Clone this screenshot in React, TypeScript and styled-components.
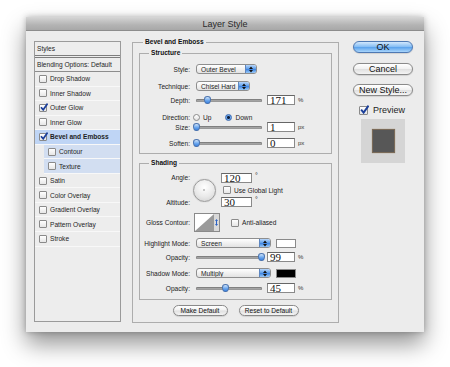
import { FC } from "react";
import styled, { createGlobalStyle } from "styled-components";

const GlobalStyle = createGlobalStyle`
	html, body {
		margin: 0;
		padding: 0;
		background: #fff;
	}
	body {
		font-family: "Liberation Sans", Arial, sans-serif;
		color: #1e1e1e;
	}
`;

const Page = styled.div`
	width: 450px;
	height: 367px;
	padding: 17px 0 0 26px;
	box-sizing: border-box;
	overflow: hidden;
`;

const Window = styled.div`
	width: 398px;
	height: 315px;
	background: #ececec;
	display: flex;
	flex-direction: column;
	box-shadow: 0 12px 22px rgba(0, 0, 0, 0.42), 0 0 6px rgba(0, 0, 0, 0.25);
`;

const TitleBar = styled.div`
	height: 13px;
	border-bottom: 1px solid #8c8c8c;
	background: linear-gradient(#d6d6d6, #b4b4b4 60%, #a8a8a8);
	display: flex;
	align-items: center;
	justify-content: center;
	font-size: 9px;
	color: #2a2a2a;
`;

const Body = styled.div`
	flex: 1;
	display: flex;
	align-items: flex-start;
	padding: 6px 0 0 8px;
`;

/* ---------- left styles list ---------- */

const StylesPanel = styled.div`
	margin-top: 4px;
	width: 87px;
	height: 281px;
	box-sizing: border-box;
	border: 1px solid #9a9a9a;
	background: #ededed;
	font-size: 6.6px;
`;

const ListHeader = styled.div`
	height: 13px;
	line-height: 13px;
	padding-left: 2px;
	border-bottom: 3px double #7d7d7d;
`;

const BlendRow = styled.div`
	height: 13px;
	line-height: 13px;
	padding-left: 2px;
	border-bottom: 1px solid #8d8d8d;
`;

const ListRow = styled.div<{ $selected?: boolean; $sub?: boolean }>`
	height: 14.55px;
	box-sizing: border-box;
	display: flex;
	align-items: center;
	gap: 3px;
	padding-left: 4px;
	margin-left: ${(p) => (p.$sub ? "9px" : "0")};
	border-bottom: 1px solid #f8f8f8;
	font-weight: ${(p) => (p.$selected ? "bold" : "normal")};
	background: ${(p) => (p.$selected ? "#bfd5f5" : p.$sub ? "#d2def1" : "transparent")};
`;

const Box = styled.span<{ $size?: number }>`
	position: relative;
	flex: none;
	width: ${(p) => p.$size || 6}px;
	height: ${(p) => p.$size || 6}px;
	border: 1px solid #8a8a8a;
	border-radius: 1px;
	background: linear-gradient(#ffffff, #e6e6e6);
	box-sizing: content-box;
`;

const Tick = styled.svg`
	position: absolute;
	left: 0;
	top: -2px;
`;

const CheckBox: FC<{ checked?: boolean; size?: number }> = ({ checked, size = 6 }) => (
	<Box $size={size}>
		{checked && (
			<Tick width={size + 2} height={size + 2} viewBox="0 0 8 8">
				<path d="M1 4.2 L3.2 6.8 L7.6 0.6" fill="none" stroke="#1b3f9a" strokeWidth="1.7" />
			</Tick>
		)}
	</Box>
);

/* ---------- middle group boxes ---------- */

const Middle = styled.div`
	margin-left: 11px;
	width: 207px;
`;

const Group = styled.fieldset<{ $pad: string; $mt?: number }>`
	margin: ${(p) => p.$mt || 0}px 0 0 0;
	padding: ${(p) => p.$pad};
	min-width: 0;
	border: 1px solid #adadad;
	box-sizing: border-box;
	width: 100%;
`;

const Legend = styled.legend<{ $ml: number }>`
	font-size: 6.6px;
	font-weight: bold;
	line-height: 10px;
	padding: 0 2px;
	margin-left: ${(p) => p.$ml}px;
	color: #111;
`;

const Row = styled.div<{ $mt?: number; $h?: number }>`
	display: grid;
	grid-template-columns: 50px 1fr;
	column-gap: 6px;
	align-items: center;
	height: ${(p) => p.$h || 10}px;
	margin-top: ${(p) => p.$mt || 0}px;
`;

const Label = styled.div`
	font-size: 6.6px;
	text-align: right;
	white-space: nowrap;
	color: #222;
`;

const Controls = styled.div`
	display: flex;
	align-items: center;
	height: 100%;
`;

const SelectBox = styled.div<{ $w: number }>`
	width: ${(p) => p.$w}px;
	height: 10px;
	box-sizing: border-box;
	display: flex;
	align-items: center;
	border: 1px solid #8e8e8e;
	border-radius: 3px;
	background: linear-gradient(#ffffff, #e3e3e3);
	font-size: 6.6px;
	overflow: hidden;
`;

const SelectText = styled.span`
	flex: 1;
	padding-left: 4px;
	white-space: nowrap;
`;

const SelectArrow = styled.span`
	width: 10px;
	height: 100%;
	display: flex;
	align-items: center;
	justify-content: center;
	border-left: 1px solid #5d86c0;
	background: linear-gradient(#b8d6fa, #5c9ce9 50%, #3f86e2 55%, #9ccaf7);
`;

const Select: FC<{ width: number; value: string }> = ({ width, value }) => (
	<SelectBox $w={width}>
		<SelectText>{value}</SelectText>
		<SelectArrow>
			<svg width="4" height="7" viewBox="0 0 4 7">
				<path d="M0 3 L2 0.5 L4 3 Z M0 4 L2 6.5 L4 4 Z" fill="#111" />
			</svg>
		</SelectArrow>
	</SelectBox>
);

const Track = styled.div`
	position: relative;
	width: 66px;
	height: 3px;
	border-radius: 2px;
	background: linear-gradient(#7d7d7d, #c9c9c9);
	box-shadow: inset 0 0 0 0.5px #777;
`;

const Thumb = styled.span`
	position: absolute;
	top: -3px;
	width: 7px;
	height: 8px;
	margin-left: -3.5px;
	border-radius: 50% 50% 45% 45% / 40% 40% 60% 60%;
	border: 0.5px solid #4b74b0;
	box-sizing: border-box;
	background: linear-gradient(#d5e8fc, #6ea9ef 55%, #3c82df);
`;

const NumField = styled.div<{ $w?: number }>`
	width: ${(p) => p.$w || 28}px;
	height: 10px;
	box-sizing: border-box;
	border: 1px solid #8a8a8a;
	border-top-color: #666;
	background: #fff;
	padding-left: 2px;
	font-family: "Liberation Serif", "Times New Roman", serif;
	font-size: 11px;
	line-height: 8px;
	color: #111;
	white-space: nowrap;
`;

const Unit = styled.span`
	font-size: 6px;
	margin-left: 3px;
	color: #333;
`;

const SliderField: FC<{ value: number; pct: number; unit: string }> = ({ value, pct, unit }) => (
	<Controls>
		<Track>
			<Thumb style={{ left: `${pct * 100}%` }} />
		</Track>
		<NumField style={{ marginLeft: 5 }}>{value}</NumField>
		<Unit>{unit}</Unit>
	</Controls>
);

const Radio = styled.span<{ $on?: boolean }>`
	width: 7px;
	height: 7px;
	box-sizing: border-box;
	border-radius: 50%;
	border: 1px solid ${(p) => (p.$on ? "#3d6bb0" : "#8a8a8a")};
	background: ${(p) =>
		p.$on
			? "radial-gradient(circle, #0d1d3a 0 1.3px, #7ab3f2 1.6px, #3e84e0)"
			: "linear-gradient(#ffffff, #e2e2e2)"};
`;

const OptText = styled.span`
	font-size: 6.6px;
	margin-left: 3px;
	color: #222;
`;

/* angle / altitude */

const AngleLabels = styled.div`
	display: flex;
	flex-direction: column;
	justify-content: space-between;
	height: 100%;
	line-height: 9px;
`;

const Dial = styled.div`
	position: relative;
	width: 23px;
	height: 23px;
	margin-left: -3px;
	box-sizing: border-box;
	border-radius: 50%;
	border: 1px solid #9b9b9b;
	background: radial-gradient(circle at 50% 35%, #ffffff, #e9e9e9 55%, #cdcdcd);
	box-shadow: 0 0 1px rgba(0, 0, 0, 0.25);
`;

const DialDot = styled.span`
	position: absolute;
	left: 9px;
	top: 9px;
	width: 2px;
	height: 2px;
	border-radius: 50%;
	background: #b5b5b5;
`;

const AngleStack = styled.div`
	display: flex;
	flex-direction: column;
	justify-content: space-between;
	height: 100%;
	margin-left: 5px;
`;

const Inline = styled.div`
	display: flex;
	align-items: center;
`;

const Degree = styled.span`
	font-size: 7px;
	margin-left: 3px;
	align-self: flex-start;
	line-height: 6px;
`;

const ContourBox = styled.div`
	width: 26px;
	height: 19px;
	margin-left: -2px;
	border: 1px solid #8a8a8a;
	box-sizing: border-box;
	display: flex;
	background: #fff;
`;

const Swatch = styled.div<{ $color: string }>`
	width: 20px;
	height: 9px;
	margin-left: 5px;
	box-sizing: border-box;
	border: 1px solid #8a8a8a;
	background: ${(p) => p.$color};
`;

const ButtonRow = styled.div`
	display: flex;
	justify-content: center;
	gap: 11px;
	margin-top: 5px;
`;

const PillButton = styled.div<{ $w: number; $primary?: boolean; $big?: boolean }>`
	width: ${(p) => p.$w}px;
	height: ${(p) => (p.$big ? 12 : 11)}px;
	box-sizing: border-box;
	border-radius: 6px;
	border: 1px solid ${(p) => (p.$primary ? "#4f79b3" : "#8a8a8a")};
	background: ${(p) =>
		p.$primary
			? "linear-gradient(#d3e8fd, #84bdf4 48%, #5aa2ec 52%, #a9d5fb)"
			: "linear-gradient(#ffffff, #f1f1f1 48%, #e0e0e0 52%, #f4f4f4)"};
	display: flex;
	align-items: center;
	justify-content: center;
	font-size: ${(p) => (p.$big ? 9 : 6.6)}px;
	color: #111;
	white-space: nowrap;
	box-shadow: 0 0.5px 1px rgba(0, 0, 0, 0.2);
`;

/* ---------- right column ---------- */

const Side = styled.div`
	margin: 4px 0 0 14px;
	width: 60px;
	display: flex;
	flex-direction: column;
`;

const PreviewRow = styled.div`
	display: flex;
	align-items: center;
	gap: 5px;
	margin: 9px 0 0 6px;
	height: 10px;
	font-size: 9px;
`;

const PreviewSwatch = styled.div`
	margin: 4px 0 0 8px;
	width: 44px;
	height: 44px;
	background: #d5d5d5;
	display: flex;
	align-items: center;
	justify-content: center;
`;

const PreviewSquare = styled.div`
	width: 21px;
	height: 22px;
	background: #575757;
	border: 1px solid #7a6a58;
	box-shadow: 0 0 1px #a08c74;
`;

const layerItems = [
	{ name: "Drop Shadow" },
	{ name: "Inner Shadow" },
	{ name: "Outer Glow", checked: true },
	{ name: "Inner Glow" },
	{ name: "Bevel and Emboss", checked: true, selected: true },
	{ name: "Contour", sub: true },
	{ name: "Texture", sub: true },
	{ name: "Satin" },
	{ name: "Color Overlay" },
	{ name: "Gradient Overlay" },
	{ name: "Pattern Overlay" },
	{ name: "Stroke" },
];

const App: FC = () => {
	return (
		<>
			<GlobalStyle />
			<Page>
				<Window>
					<TitleBar>Layer Style</TitleBar>
					<Body>
						<StylesPanel>
							<ListHeader>Styles</ListHeader>
							<BlendRow>Blending Options: Default</BlendRow>
							{layerItems.map((item) => (
								<ListRow key={item.name} $selected={item.selected} $sub={item.sub}>
									<CheckBox checked={item.checked} />
									{item.name}
								</ListRow>
							))}
						</StylesPanel>

						<Middle>
							<Group $pad="1px 6px 6px 6px">
								<Legend $ml={4}>Bevel and Emboss</Legend>
								<Group $pad="6px 0 5px 0">
									<Legend $ml={9}>Structure</Legend>
									<Row>
										<Label>Style:</Label>
										<Controls>
											<Select width={61} value="Outer Bevel" />
										</Controls>
									</Row>
									<Row $mt={7}>
										<Label>Technique:</Label>
										<Controls>
											<Select width={54} value="Chisel Hard" />
										</Controls>
									</Row>
									<Row $mt={4}>
										<Label>Depth:</Label>
										<SliderField value={171} pct={0.171} unit="%" />
									</Row>
									<Row $mt={7}>
										<Label>Direction:</Label>
										<Controls style={{ marginLeft: -3 }}>
											<Radio />
											<OptText>Up</OptText>
											<Radio $on style={{ marginLeft: 14 }} />
											<OptText>Down</OptText>
										</Controls>
									</Row>
									<Row>
										<Label>Size:</Label>
										<SliderField value={1} pct={0.01} unit="px" />
									</Row>
									<Row $mt={6}>
										<Label>Soften:</Label>
										<SliderField value={0} pct={0.01} unit="px" />
									</Row>
								</Group>

								<Group $pad="5px 0 6px 0" $mt={4}>
									<Legend $ml={9}>Shading</Legend>
									<Row $h={34}>
										<AngleLabels>
											<Label>Angle:</Label>
											<Label>Altitude:</Label>
										</AngleLabels>
										<Controls>
											<Dial>
												<DialDot />
											</Dial>
											<AngleStack>
												<Inline>
													<NumField $w={31}>120</NumField>
													<Degree>°</Degree>
												</Inline>
												<Inline style={{ marginLeft: 2 }}>
													<CheckBox />
													<OptText>Use Global Light</OptText>
												</Inline>
												<Inline>
													<NumField $w={31}>30</NumField>
													<Degree>°</Degree>
												</Inline>
											</AngleStack>
										</Controls>
									</Row>
									<Row $h={19} $mt={6}>
										<Label>Gloss Contour:</Label>
										<Controls>
											<ContourBox>
												<svg width="24" height="17" viewBox="0 0 24 17">
													<rect width="24" height="17" fill="#fff" />
													<polygon points="0,17 19,0 19,17" fill="#9a9a9a" />
													<rect x="19" width="5" height="17" fill="#d9d9d9" />
													<path d="M20 7 L21.5 5 L23 7 Z M20 10 L21.5 12 L23 10 Z" fill="#2b62c4" />
													<rect x="21" y="7" width="1" height="3" fill="#2b62c4" />
												</svg>
											</ContourBox>
											<Inline style={{ marginLeft: 11 }}>
												<CheckBox />
												<OptText>Anti-aliased</OptText>
											</Inline>
										</Controls>
									</Row>
									<Row $mt={6}>
										<Label>Highlight Mode:</Label>
										<Controls>
											<Select width={75} value="Screen" />
											<Swatch $color="#ffffff" />
										</Controls>
									</Row>
									<Row $mt={4}>
										<Label>Opacity:</Label>
										<SliderField value={99} pct={0.99} unit="%" />
									</Row>
									<Row $mt={6}>
										<Label>Shadow Mode:</Label>
										<Controls>
											<Select width={75} value="Multiply" />
											<Swatch $color="#000000" />
										</Controls>
									</Row>
									<Row $mt={5}>
										<Label>Opacity:</Label>
										<SliderField value={45} pct={0.45} unit="%" />
									</Row>
								</Group>

								<ButtonRow>
									<PillButton $w={55}>Make Default</PillButton>
									<PillButton $w={60}>Reset to Default</PillButton>
								</ButtonRow>
							</Group>
						</Middle>

						<Side>
							<PillButton $w={60} $primary $big>
								OK
							</PillButton>
							<PillButton $w={60} $big style={{ marginTop: 10 }}>
								Cancel
							</PillButton>
							<PillButton $w={60} $big style={{ marginTop: 9 }}>
								New Style...
							</PillButton>
							<PreviewRow>
								<CheckBox checked size={7} />
								Preview
							</PreviewRow>
							<PreviewSwatch>
								<PreviewSquare />
							</PreviewSwatch>
						</Side>
					</Body>
				</Window>
			</Page>
		</>
	);
};

export default App;
